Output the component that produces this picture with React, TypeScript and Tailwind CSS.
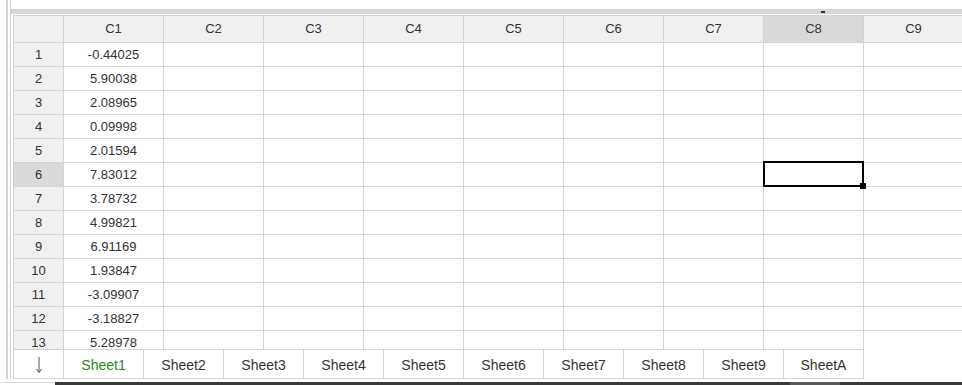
import React from "react";

const columns = ["C1", "C2", "C3", "C4", "C5", "C6", "C7", "C8", "C9"];

const values = [
  "-0.44025",
  "5.90038",
  "2.08965",
  "0.09998",
  "2.01594",
  "7.83012",
  "3.78732",
  "4.99821",
  "6.91169",
  "1.93847",
  "-3.09907",
  "-3.18827",
  "5.28978",
];

const sheets = ["Sheet1", "Sheet2", "Sheet3", "Sheet4", "Sheet5", "Sheet6", "Sheet7", "Sheet8", "Sheet9", "SheetA"];

const activeCol = 7; // C8
const activeRow = 5; // row 6

export default function App() {
  return (
    <div className="w-[962px] h-[385px] bg-white overflow-hidden flex flex-col font-['Liberation_Sans',Arial,sans-serif] text-[13px] text-[#333]">
      <div className="flex h-[379px]">
        {/* left frame lines */}
        <div className="w-[11px] shrink-0 flex">
          <div className="w-[6px]" />
          <div className="w-[2px] bg-[#d4d4d4]" />
          <div className="w-[2px]" />
          <div className="w-[1px] bg-[#d4d4d4]" />
        </div>

        <div className="flex-1 flex flex-col min-w-0">
          {/* top strip */}
          <div className="h-[9px]" />
          <div className="h-[5px] bg-[#d6d6d6] flex items-center">
            <div className="w-[810px]" />
            <div className="w-[4px] h-[2px] bg-[#333]" />
          </div>
          <div className="h-[1px]" />

          {/* grid */}
          <div className="h-[334px] overflow-hidden pl-[2px]">
            <div className="relative w-[951px] border-t border-l border-[#d4d4d4] grid grid-cols-[50px_repeat(9,100px)]">
              <div className="h-[27px] bg-[#f0f0f0] border-r border-b border-[#d4d4d4]" />
              {columns.map((c, i) => (
                <div
                  key={c}
                  className={`h-[27px] border-r border-b border-[#d4d4d4] flex items-center justify-center ${
                    i === activeCol ? "bg-[#d9d9d9]" : "bg-[#f0f0f0]"
                  }`}
                >
                  {c}
                </div>
              ))}

              {values.map((v, r) => (
                <React.Fragment key={r}>
                  <div
                    className={`h-[24px] border-r border-b border-[#d4d4d4] flex items-center justify-center ${
                      r === activeRow ? "bg-[#dadada]" : "bg-[#f0f0f0]"
                    }`}
                  >
                    {r + 1}
                  </div>
                  {columns.map((c, i) => (
                    <div
                      key={c}
                      className="h-[24px] border-r border-b border-[#d4d4d4] flex items-center justify-center"
                    >
                      {i === 0 ? v : ""}
                    </div>
                  ))}
                </React.Fragment>
              ))}

              {/* active cell */}
              <div className="absolute left-[749px] top-[145px] w-[101px] h-[26px] border-2 border-black" />
              <div className="absolute left-[846px] top-[167px] w-[6px] h-[6px] bg-black" />
            </div>
          </div>

          {/* sheet tabs */}
          <div className="h-[30px] pl-[2px] flex text-[14px]">
            <div className="w-[51px] h-[30px] border-l border-t border-r border-b border-[#d4d4d4] flex items-center justify-center pt-[2px]">
              <svg width="10" height="18" viewBox="0 0 10 18" fill="none" stroke="#555" strokeWidth="1">
                <line x1="5" y1="1" x2="5" y2="16.5" />
                <polyline points="2.5,13 5,16.5 7.5,13" />
              </svg>
            </div>
            {sheets.map((s, i) => (
              <div
                key={s}
                className={`w-[80px] h-[30px] border-t border-r border-b border-[#d4d4d4] flex items-center justify-center pt-[2px] ${
                  i === 0 ? "text-[#1e8a1e]" : ""
                }`}
              >
                {s}
              </div>
            ))}
          </div>
        </div>
      </div>

      {/* bottom strip */}
      <div className="h-[6px] flex flex-col">
        <div className="h-[3px]" />
        <div className="h-[3px] flex">
          <div className="w-[55px] flex flex-col">
            <div className="h-[1px] bg-[#dcdcdc]" />
          </div>
          <div className="w-[735px] bg-[#3a3a3a]" />
          <div className="w-[50px] bg-[#5a5a5a]" />
          <div className="flex-1 bg-[#3a3a3a]" />
        </div>
      </div>
    </div>
  );
}
